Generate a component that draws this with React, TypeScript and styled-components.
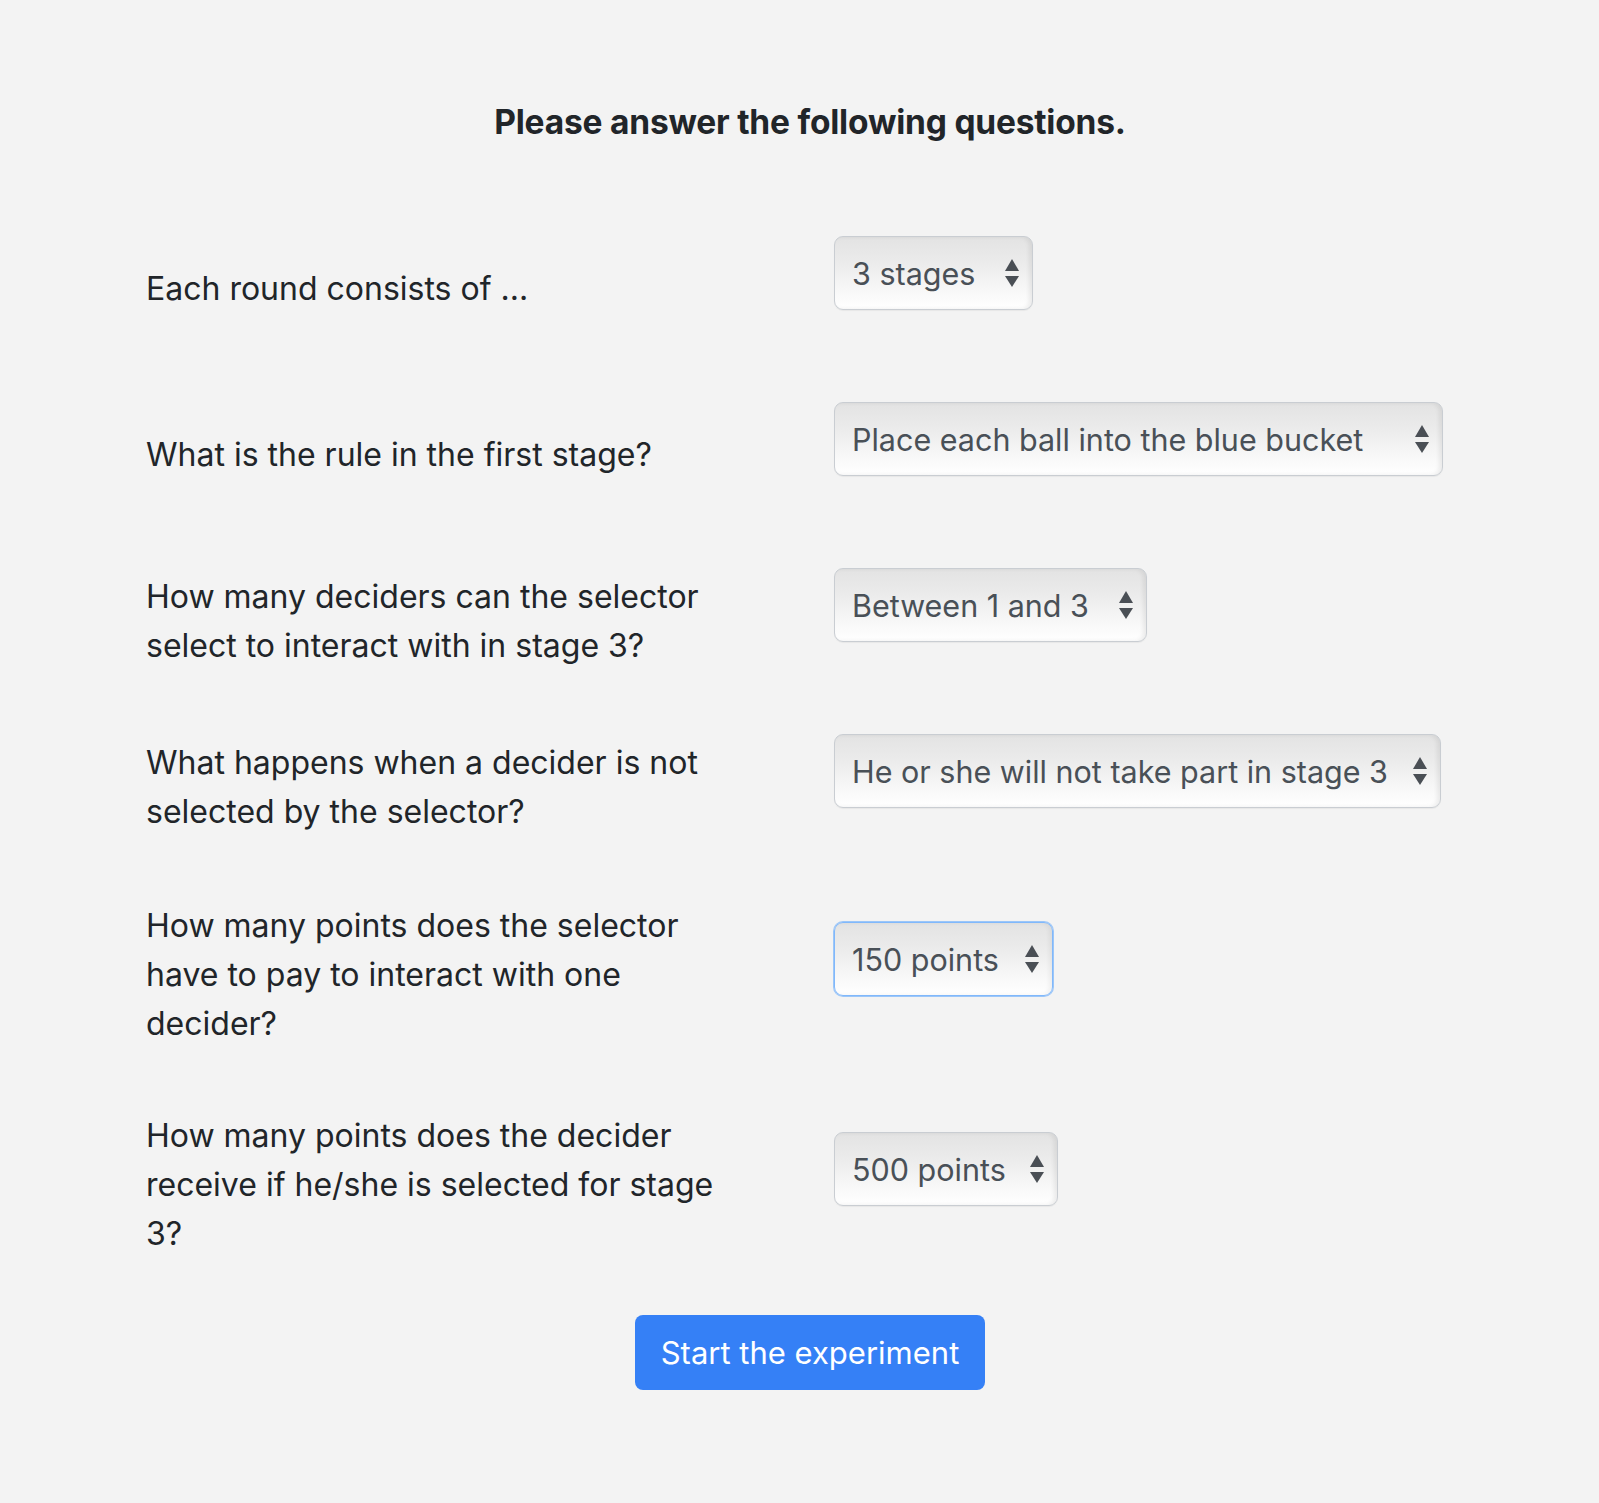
import React from "react";
import styled, { createGlobalStyle } from "styled-components";

const GlobalStyle = createGlobalStyle`
  html, body {
    margin: 0;
    padding: 0;
    background: #f3f3f3;
  }
  body {
    font-family: Inter, "Noto Sans", "Liberation Sans", sans-serif;
    color: #212529;
  }
`;

const Page = styled.main`
  min-height: 1503px;
  box-sizing: border-box;
  padding: 102px 0 0 146px;
  width: 1474px;
`;

const Title = styled.h1`
  margin: 0 0 94px;
  font-size: 33.5px;
  line-height: 40px;
  font-weight: 700;
  text-align: center;
  color: #212529;
  letter-spacing: -0.2px;
`;

const Form = styled.form`
  display: flex;
  flex-direction: column;
`;

const Rows = styled.div`
  display: flex;
  flex-direction: column;
  gap: 62px;
`;

const Row = styled.div`
  display: grid;
  grid-template-columns: 592px 1fr;
  column-gap: 96px;
  align-items: center;
`;

const Label = styled.label`
  font-size: 32px;
  line-height: 49px;
  color: #212529;
  padding-top: 1px;
`;

const SelectWrap = styled.div<{ $width: number }>`
  position: relative;
  width: ${(p) => p.$width}px;
  height: 74px;
  margin-bottom: 30px;
`;

const Select = styled.select<{ $focused?: boolean }>`
  appearance: none;
  -webkit-appearance: none;
  width: 100%;
  height: 100%;
  box-sizing: border-box;
  padding: 0 40px 0 17px;
  font-family: Inter, "Noto Sans", "Liberation Sans", sans-serif;
  font-size: 30.5px;
  color: #495057;
  border-radius: 9px;
  border: 1px solid ${(p) => (p.$focused ? "#80b8fb" : "#c9cdd2")};
  box-shadow: ${(p) =>
    p.$focused
      ? "0 0 0 1px #9cc6f8, inset -3px 0 4px rgba(0,0,0,0.05)"
      : "inset -3px 0 4px rgba(0,0,0,0.07), 0 1px 1px rgba(0,0,0,0.05)"};
  background: linear-gradient(to bottom, #e3e3e3 0%, #ebebeb 35%, #f8f8f8 75%, #ffffff 100%);
  outline: none;
  cursor: pointer;
`;

const Arrow = styled.svg`
  position: absolute;
  right: 14px;
  top: 50%;
  transform: translateY(-50%);
  width: 14px;
  height: 28px;
  pointer-events: none;
`;

const ButtonRow = styled.div`
  display: flex;
  justify-content: center;
  margin-top: 57px;
`;

const Button = styled.button`
  width: 350px;
  height: 75px;
  border: none;
  border-radius: 8px;
  background: #3580f6;
  color: #ffffff;
  font-family: Inter, "Noto Sans", "Liberation Sans", sans-serif;
  font-size: 31px;
  cursor: pointer;
`;

type Question = {
  label: string;
  value: string;
  options: string[];
  width: number;
  focused?: boolean;
};

const questions: Question[] = [
  {
    label: "Each round consists of ...",
    value: "3 stages",
    options: ["3 stages", "2 stages", "4 stages"],
    width: 199,
  },
  {
    label: "What is the rule in the first stage?",
    value: "Place each ball into the blue bucket",
    options: ["Place each ball into the blue bucket", "Place each ball into the red bucket"],
    width: 609,
  },
  {
    label: "How many deciders can the selector select to interact with in stage 3?",
    value: "Between 1 and 3",
    options: ["Between 1 and 3", "Exactly 1", "Exactly 4"],
    width: 313,
  },
  {
    label: "What happens when a decider is not selected by the selector?",
    value: "He or she will not take part in stage 3",
    options: ["He or she will not take part in stage 3", "He or she will earn nothing"],
    width: 607,
  },
  {
    label: "How many points does the selector have to pay to interact with one decider?",
    value: "150 points",
    options: ["150 points", "100 points", "50 points"],
    width: 219,
    focused: true,
  },
  {
    label: "How many points does the decider receive if he/she is selected for stage 3?",
    value: "500 points",
    options: ["500 points", "300 points", "100 points"],
    width: 224,
  },
];

const ArrowIcon = () => (
  <Arrow viewBox="0 0 14 28">
    <path d="M7 0 L14 12 L0 12 Z" fill="#4a4f55" />
    <path d="M0 17 L14 17 L7 28 Z" fill="#4a4f55" />
  </Arrow>
);

export default function App() {
  return (
    <>
      <GlobalStyle />
      <Page>
        <Title>Please answer the following questions.</Title>
        <Form onSubmit={(e) => e.preventDefault()}>
          <Rows>
            {questions.map((q, i) => (
              <Row key={i}>
                <Label htmlFor={`q${i}`}>{q.label}</Label>
                <SelectWrap $width={q.width}>
                  <Select id={`q${i}`} defaultValue={q.value} $focused={q.focused}>
                    {q.options.map((o) => (
                      <option key={o} value={o}>
                        {o}
                      </option>
                    ))}
                  </Select>
                  <ArrowIcon />
                </SelectWrap>
              </Row>
            ))}
          </Rows>
          <ButtonRow>
            <Button type="submit">Start the experiment</Button>
          </ButtonRow>
        </Form>
      </Page>
    </>
  );
}
